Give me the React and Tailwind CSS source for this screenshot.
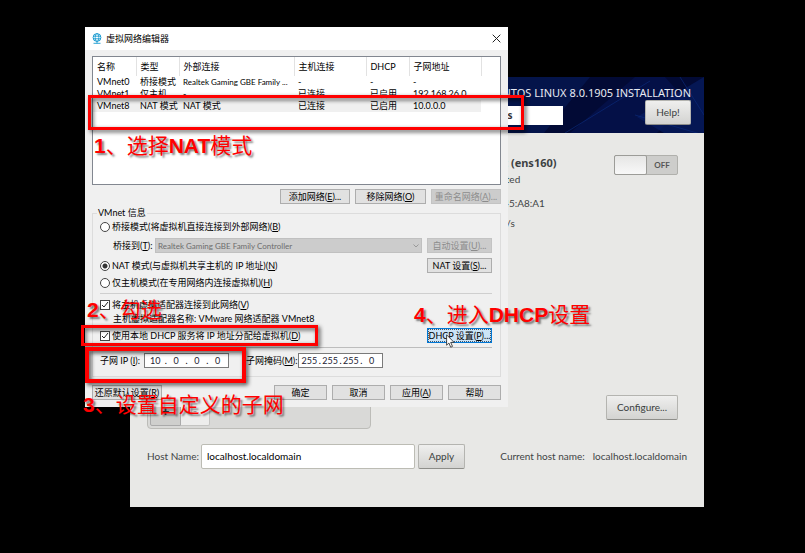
import React from "react";

const uiFont = "font-['Lato','Noto_Sans_CJK_SC',sans-serif]";
const gtkFont = "font-['Lato',sans-serif]";
const titleFont = "font-['Noto_Sans',sans-serif]";
const markFont = "font-['Liberation_Sans','Noto_Sans_CJK_SC',sans-serif]";

function Key({ children }) {
  return (
    <>
      (<span className="underline decoration-1 underline-offset-1">{children}</span>)
    </>
  );
}

function WinButton({ className = "", disabled = false, children }) {
  return (
    <button
      type="button"
      disabled={disabled}
      className={`flex h-[15px] shrink-0 items-center justify-center whitespace-nowrap border text-[9px] leading-none ${
        disabled ? "border-[#c3c3c3] bg-[#cccccc] text-[#8c8c8c]" : "border-[#adadad] bg-[#e1e1e1] text-black"
      } ${className}`}
    >
      {children}
    </button>
  );
}

function Radio({ id, checked = false, children }) {
  return (
    <div className="flex h-3 items-center gap-[2px]">
      <input
        type="radio"
        name="vmnet-mode"
        id={id}
        defaultChecked={checked}
        className="size-[10px] shrink-0 appearance-none rounded-full border border-[#444] bg-white checked:bg-[radial-gradient(circle,#333_0_2px,#fff_3px)]"
      />
      <label htmlFor={id} className="whitespace-nowrap">{children}</label>
    </div>
  );
}

function Check({ id, children }) {
  return (
    <div className="flex h-3 items-center gap-[2px]">
      <span className="grid size-[10px] shrink-0">
        <input
          type="checkbox"
          id={id}
          defaultChecked
          className="col-start-1 row-start-1 size-[10px] appearance-none border border-[#444] bg-white"
        />
        <svg viewBox="0 0 10 10" className="pointer-events-none col-start-1 row-start-1 size-[10px]" fill="none" stroke="#222">
          <path d="M2 5l2 2 4-5" />
        </svg>
      </span>
      <label htmlFor={id} className="whitespace-nowrap">{children}</label>
    </div>
  );
}

function Octets({ label, values }) {
  return (
    <div role="group" aria-label={label} className="flex h-[15px] w-[85px] items-center border border-[#7a7a7a] bg-white px-px text-[9px]">
      {values.map((v, i) => (
        <React.Fragment key={i}>
          {i > 0 && <span>.</span>}
          <input
            type="text"
            aria-label={`${label} ${i + 1}`}
            defaultValue={v}
            className="h-3 w-0 min-w-0 flex-1 bg-transparent text-center text-[#223]"
          />
        </React.Fragment>
      ))}
    </div>
  );
}

const columns = ["名称", "类型", "外部连接", "主机连接", "DHCP", "子网地址"];
const rows = [
  ["VMnet0", "桥接模式", "Realtek Gaming GBE Family ...", "-", "-", "-"],
  ["VMnet1", "仅主机...", "-", "已连接", "已启用", "192.168.26.0"],
  ["VMnet8", "NAT 模式", "NAT 模式", "已连接", "已启用", "10.0.0.0"],
];

function NetworkTable() {
  return (
    <div className="h-[129px] border border-[#828790] bg-white">
      <table className="w-[388px] table-fixed border-collapse text-left">
        <colgroup>
          <col className="w-[43px]" />
          <col className="w-[43px]" />
          <col className="w-[115px]" />
          <col className="w-[72px]" />
          <col className="w-[43px]" />
          <col className="w-[72px]" />
        </colgroup>
        <thead>
          <tr className="h-[19px]">
            {columns.map((c) => (
              <th key={c} className="border-r border-[#e2e2e2] p-0 pl-1 font-normal leading-3">{c}</th>
            ))}
          </tr>
        </thead>
        <tbody>
          {rows.map((r, n) => (
            <tr key={r[0]} className={`h-3 ${n === 2 ? "bg-[#f0f0f0]" : ""}`}>
              {r.map((c, i) => (
                <td key={i} className={`whitespace-nowrap p-0 pl-1 leading-3 ${c.length > 20 ? "text-[8px]" : ""}`}>{c}</td>
              ))}
            </tr>
          ))}
        </tbody>
      </table>
    </div>
  );
}

function NetworkEditor() {
  return (
    <section className={`absolute left-[85px] top-[27px] w-[423px] bg-[#f0f0f0] text-[9px] leading-3 text-black ${uiFont}`}>
      <header className="flex h-[23px] items-center gap-1 bg-white pl-[7px] pr-[7px]">
        <svg viewBox="0 0 10 11" className="h-[11px] w-[10px]" fill="none" stroke="#1a9bd0">
          <circle cx="5" cy="4.5" r="3.9" />
          <ellipse cx="5" cy="4.5" rx="1.8" ry="3.9" strokeWidth=".8" />
          <path d="M1 3.2h8M1 5.8h8M1.5 10.3h7M5 8.4v2" strokeWidth=".9" />
        </svg>
        <h1 className="flex-1">虚拟网络编辑器</h1>
        <button type="button" aria-label="关闭">
          <svg viewBox="0 0 9 9" className="size-[9px]" stroke="#222" fill="none">
            <path d="M.7.7l7.6 7.6M8.3.7L.7 8.3" />
          </svg>
        </button>
      </header>
      <div className="px-[7px] pb-[7px] pt-[6px]">
        <NetworkTable />
        <div className="mt-1 flex justify-end gap-[5px]">
          <WinButton className="w-[70px]">添加网络<Key>E</Key>...</WinButton>
          <WinButton className="w-[71px]">移除网络<Key>O</Key></WinButton>
          <WinButton className="w-[70px]" disabled>重命名网络<Key>A</Key>...</WinButton>
        </div>
        <fieldset className="mt-[3px] border border-[#dcdcdc] pb-2 pl-[7px] pr-2">
          <legend className="-ml-[3px] h-3 px-px">VMnet 信息</legend>
          <div className="pt-[2px]">
            <Radio id="bridged">桥接模式(将虚拟机直接连接到外部网络)<Key>B</Key></Radio>
          </div>
          <div className="mt-[5px] flex h-[15px] items-center">
            <label htmlFor="bridge-to" className="w-[55px] whitespace-nowrap pl-[13px]">桥接到<Key>T</Key>:</label>
            <span className="grid flex-1">
              <select
                id="bridge-to"
                disabled
                className="col-start-1 row-start-1 h-[15px] w-full appearance-none border border-[#c0c0c0] bg-[#cccccc] pl-[2px] text-[8px] leading-none text-[#6c6c6c] opacity-100"
              >
                <option>Realtek Gaming GBE Family Controller</option>
              </select>
              <svg viewBox="0 0 6 4" className="pointer-events-none col-start-1 row-start-1 mr-[3px] h-1 w-[6px] self-center justify-self-end" fill="none" stroke="#999">
                <path d="M.5.5L3 3 5.500.5" />
              </svg>
            </span>
            <WinButton className="ml-[5px] w-[65px]" disabled>自动设置<Key>U</Key>...</WinButton>
          </div>
          <div className="mt-[5px] flex items-center justify-between">
            <Radio id="nat" checked>NAT 模式(与虚拟机共享主机的 IP 地址)<Key>N</Key></Radio>
            <WinButton className="w-[65px]">NAT 设置<Key>S</Key>...</WinButton>
          </div>
          <div className="mt-1">
            <Radio id="host-only">仅主机模式(在专用网络内连接虚拟机)<Key>H</Key></Radio>
          </div>
          <hr className="mt-1 border-[#cfcfcf]" />
          <div className="mt-[5px]">
            <Check id="host-adapter">将主机虚拟适配器连接到此网络<Key>V</Key></Check>
          </div>
          <p className="mt-[2px] h-3 pl-[13px]">主机虚拟适配器名称: VMware 网络适配器 VMnet8</p>
          <div className="mt-[3px] flex items-center justify-between">
            <Check id="use-dhcp">使用本地 DHCP 服务将 IP 地址分配给虚拟机<Key>D</Key></Check>
            <button
              type="button"
              className="flex h-[15px] w-[65px] items-center justify-center whitespace-nowrap border border-[#0078d7] bg-[#cce4f7] text-[9px] leading-none outline-1 -outline-offset-2 outline-dotted outline-[#456]"
            >
              DHCP 设置<Key>P</Key>...
            </button>
          </div>
          <hr className="mt-1 border-[#bdbdbd]" />
          <div className="mt-[5px] flex h-[15px] items-center">
            <span className="w-[44px] whitespace-nowrap">子网 IP <Key>I</Key>:</span>
            <Octets label="子网 IP" values={["10", "0", "0", "0"]} />
            <span className="ml-[17px] w-[52px] whitespace-nowrap">子网掩码<Key>M</Key>:</span>
            <Octets label="子网掩码" values={["255", "255", "255", "0"]} />
          </div>
        </fieldset>
        <footer className="mt-2 flex gap-[5px]">
          <WinButton className="mr-auto w-[70px]">还原默认设置<Key>R</Key></WinButton>
          <WinButton className="w-[53px]">确定</WinButton>
          <WinButton className="w-[53px]">取消</WinButton>
          <WinButton className="w-[53px]">应用<Key>A</Key></WinButton>
          <WinButton className="w-[53px]">帮助</WinButton>
        </footer>
      </div>
    </section>
  );
}

function GtkButton({ className = "", children }) {
  return (
    <button
      type="button"
      className={`h-[25px] rounded-xs border border-[#b4b4b0] border-b-[#8e8e8a] bg-linear-to-b from-[#efefee] to-[#d3d3d1] pb-[2px] text-[10px] text-[#3a3f40] ${className}`}
    >
      {children}
    </button>
  );
}

function Installer() {
  return (
    <section className={`absolute left-[130px] top-[77px] w-[574px] bg-[#e8e8e6] text-[10px] leading-4 text-[#3f4445] ${gtkFont}`}>
      <header className="grid h-14 bg-[#020a35]">
        <svg viewBox="0 0 574 56" preserveAspectRatio="none" className="col-start-1 row-start-1 h-14 w-full">
          <path d="M370 0h90l-46 56h-44z" fill="#04144a" />
          <path d="M440 56L505 0h30l22 25-30 31z" fill="#061250" opacity=".7" />
          <path d="M507 40l67-40v56h-40z" fill="#071d62" opacity=".7" />
          <path d="M435 56l85-52M505 38l69 20M550 0l24 38" stroke="#0b2a78" fill="none" opacity=".7" />
        </svg>
        <div className="col-start-1 row-start-1 pr-[13px] pt-2">
          <h2 className={`text-right text-[11px] leading-[15px] text-[#e8eaf2] ${titleFont}`}>CENTOS LINUX 8.0.1905 INSTALLATION</h2>
          <div className="flex items-end justify-end gap-[82px]">
            <input
              type="text"
              aria-label="Keyboard layout"
              defaultValue="us"
              className={`h-[19px] w-[72px] bg-white pb-[2px] pl-[10px] text-[10px] font-bold text-[#333] ${titleFont}`}
            />
            <GtkButton className="w-[46px]">Help!</GtkButton>
          </div>
        </div>
      </header>
      <div className="flex pl-[17px] pr-[26px] pt-[22px]">
        <div className="flex h-[274px] w-[224px] flex-col justify-end rounded-sm border border-[#bcbcb8] bg-[#d9d9d7] p-[2px]">
          <div className="flex">
            <button type="button" className="h-[30px] w-[31px] rounded-bl-xs border border-[#aaa] bg-[#cfcfcd] text-[14px] font-bold text-[#333]">+</button>
            <button type="button" className="h-[30px] w-[29px] rounded-br-xs border border-l-0 border-[#c4c4c2] bg-[#ededec] text-[12px] text-[#999]">-</button>
          </div>
        </div>
        <div className="flex-1 pl-[89px]">
          <h3 className={`text-[11px] font-bold leading-4 text-[#3c4142] ${titleFont}`}>Ethernet (ens160)</h3>
          <p>Disconnected</p>
          <p className="mt-2">00:0C:29:45:A8:A1</p>
          <p className="mt-1">10000 Mb/s</p>
        </div>
        <div className="flex flex-col items-end justify-between pb-[9px]">
          <button type="button" role="switch" aria-checked="false" className="flex h-5 w-16 items-center rounded-xs border border-[#b0b0ac] bg-[#cdcdcb] text-[8px] font-bold text-[#555]">
            <span className="-my-px -ml-px h-5 w-[33px] rounded-xs border border-[#9c9c98] bg-linear-to-b from-[#e6e6e5] to-[#f8f8f8]" />
            <span className="flex-1">OFF</span>
          </button>
          <GtkButton className="w-[72px]">Configure...</GtkButton>
        </div>
      </div>
      <div className="flex items-center pb-[38px] pl-[17px] pr-[17px] pt-[15px]">
        <label htmlFor="host-name" className="w-[54px] whitespace-nowrap pb-[2px]">Host Name:</label>
        <input
          type="text"
          id="host-name"
          defaultValue="localhost.localdomain"
          className="h-[25px] w-[214px] rounded-xs border border-[#bcbcb4] bg-white pb-[2px] pl-[5px] text-black"
        />
        <GtkButton className="ml-[3px] w-[47px]">Apply</GtkButton>
        <span className="ml-auto whitespace-nowrap pb-[2px]">Current host name:</span>
        <span className="ml-2 pb-[2px]">localhost.localdomain</span>
      </div>
    </section>
  );
}

function Note({ className, children }) {
  return (
    <p className={`absolute whitespace-nowrap text-[21px] leading-6 text-[#f00] text-shadow-[2px_2px_2px_rgb(0_0_0/0.5)] ${markFont} ${className}`}>
      {children}
    </p>
  );
}

function Frame({ className }) {
  return (
    <div className={`pointer-events-none absolute border-[#f00] drop-shadow-[2px_2px_2px_rgba(0,0,0,0.7)] ${className}`} />
  );
}

export default function App() {
  return (
    <main className="relative min-h-screen overflow-hidden bg-black">
      <Installer />
      <NetworkEditor />
      <Frame className="left-[88px] top-[95px] h-[35px] w-[436px] border-3" />
      <Frame className="left-[81px] top-[325px] h-[21px] w-[237px] border-3" />
      <Frame className="left-[85px] top-[347px] h-[36px] w-[161px] border-4" />
      <Note className="left-[94px] top-[134px]"><b>1</b>、选择<b>NAT</b>模式</Note>
      <Note className="left-[87px] top-[298px]"><b>2</b>、勾选</Note>
      <Note className="left-[83px] top-[393px]"><b>3</b>、设置自定义的子网</Note>
      <Note className="left-[414px] top-[303px]"><b>4</b>、进入<b>DHCP</b>设置</Note>
      <svg viewBox="0 0 9 14" className="absolute left-[446px] top-[334px] h-[14px] w-[9px]" fill="#fff" stroke="#222" strokeWidth=".8">
        <path d="M.6.8v10.400l2.300-2.200 1.800 4.200 1.800-.8-1.800-4h3.400z" />
      </svg>
    </main>
  );
}
